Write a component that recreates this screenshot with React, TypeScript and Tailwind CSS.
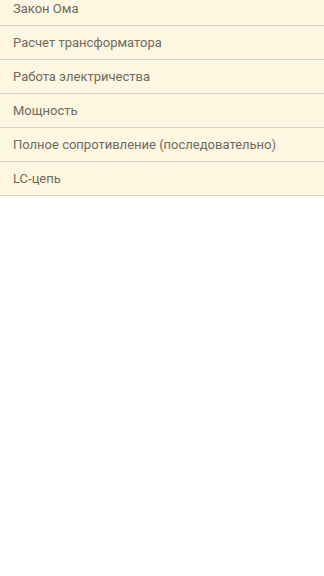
const items = [
  "Закон Ома",
  "Расчет трансформатора",
  "Работа электричества",
  "Мощность",
  "Полное сопротивление (последовательно)",
  "LC-цепь",
];

export default function App() {
  return (
    <div className="min-h-screen bg-white overflow-hidden font-['Roboto',sans-serif]">
      <div className="-mt-[8px]">
        {items.map((item) => (
          <div
            key={item}
            className="h-[34px] flex items-center pt-[1px] px-[13px] bg-[#fdf6e1] border-b border-[#d8d3ca] text-[13px] text-[#6e6b60]"
          >
            {item}
          </div>
        ))}
      </div>
    </div>
  );
}
